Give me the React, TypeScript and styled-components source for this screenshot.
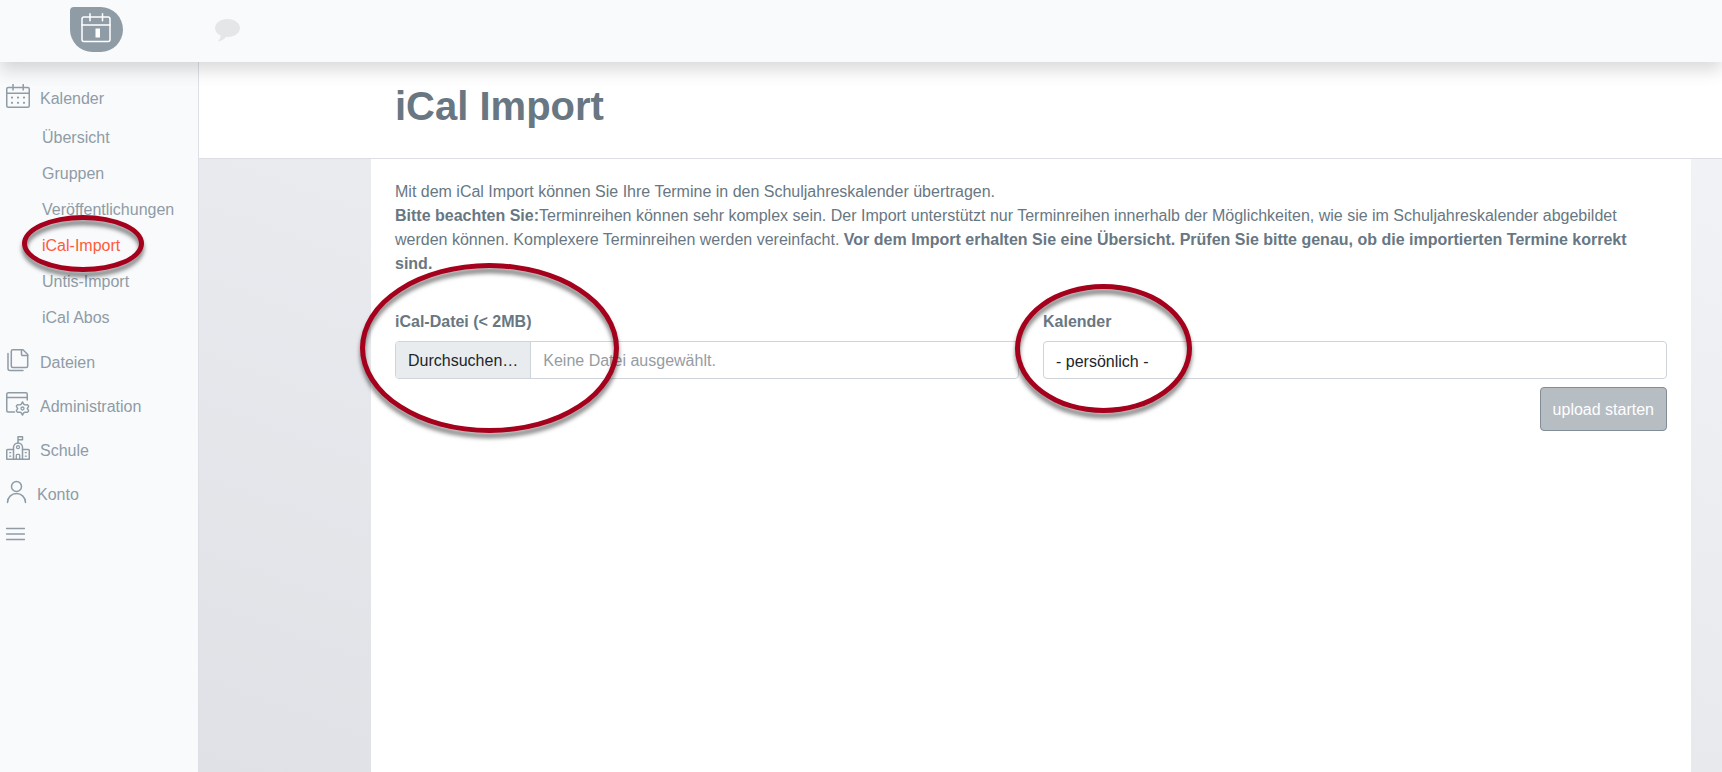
import React from "react";
import styled, { createGlobalStyle, css } from "styled-components";

const GlobalStyle = createGlobalStyle`
  *, *::before, *::after { box-sizing: border-box; }
  body {
    margin: 0;
    font-family: "Liberation Sans", Arial, sans-serif;
    font-size: 16px;
    line-height: 24px;
    color: #687782;
    background: #f8fafc;
  }
`;

const Page = styled.div`
  display: flex;
  flex-direction: column;
  min-height: 100vh;
`;

const Header = styled.header`
  position: relative;
  z-index: 2;
  display: flex;
  align-items: flex-start;
  gap: 92px;
  height: 62px;
  padding: 7px 70px;
  background: #f8fafc;
  box-shadow: 0 8px 16px rgba(0, 0, 0, 0.15);
`;

const Logo = styled.a`
  display: flex;
  justify-content: center;
  width: 53px;
  height: 45px;
  padding: 6px 2px 0 0;
  border-radius: 4px 23px 23px 23px;
  background: #8f9ca6;
  color: #fff;
`;

const ChatButton = styled.button`
  display: flex;
  padding: 12px 0 0;
  border: 0;
  background: none;
  color: #e5e6e7;
`;

const Body = styled.div`
  display: flex;
  flex: 1;
`;

const Sidebar = styled.nav`
  width: 199px;
  flex: none;
  padding-top: 12px;
  border-right: 1px solid #dcdfe4;
`;

const Menu = styled.ul`
  margin: 0;
  padding: 0;
  list-style: none;
`;

const SubMenu = styled(Menu)`
  padding: 1px 0 3px;
`;

const MenuLink = styled.a`
  display: flex;
  align-items: flex-start;
  gap: 10px;
  height: 44px;
  padding: 10px 6px;
  color: #8f9ca6;
  text-decoration: none;
`;

const MenuText = styled.span`
  padding-top: 3px;
`;

const SubItem = styled.li`
  position: relative;
`;

const SubLink = styled.a<{ $active?: boolean }>`
  display: block;
  padding: 7px 0 5px 42px;
  color: ${(p) => (p.$active ? "#ff5b3a" : "#8f9ca6")};
  text-decoration: none;
`;

const MenuToggle = styled.button`
  display: block;
  padding: 13px 6px;
  border: 0;
  background: none;
  color: #8f9ca6;

  svg { display: block; }
`;

const Main = styled.main`
  display: flex;
  flex: 1;
  flex-direction: column;
  min-width: 0;
  background: linear-gradient(20deg, #dfe1e6, #f3f4f7);
`;

const TitleBar = styled.div`
  padding: 20px 55px 28px 196px;
  border-bottom: 1px solid #dddfe5;
  background: #fff;
`;

const Title = styled.h1`
  margin: 0;
  font-size: 40px;
  line-height: 48px;
  font-weight: 700;
`;

const Panel = styled.section`
  flex: 1;
  margin: 0 31px 0 172px;
  padding: 21px 24px;
  background: #fff;
`;

const Intro = styled.p`
  margin: 0 0 34px;
`;

const FieldRow = styled.div`
  display: grid;
  grid-template-columns: 1fr 1fr;
  gap: 24px;
`;

const Field = styled.div`
  position: relative;
`;

const Label = styled.label`
  display: block;
  margin-bottom: 7px;
  font-weight: 700;
`;

const control = css`
  width: 100%;
  height: 38px;
  border: 1px solid #ced4da;
  border-radius: 4px;
  background: #fff;
`;

const FilePicker = styled.label`
  ${control}
  display: flex;
  overflow: hidden;
  color: #959ca3;
`;

const FileInput = styled.input`
  position: absolute;
  width: 1px;
  height: 1px;
  opacity: 0;
`;

const FileButton = styled.span`
  padding: 7px 12px 5px;
  border-right: 1px solid #ced4da;
  background: #e9ecef;
  color: #212529;
`;

const FileName = styled.span`
  padding: 7px 12px 5px;
`;

const Select = styled.select`
  ${control}
  padding: 8px 12px 6px;
  appearance: none;
  color: #212529;
  font: inherit;
`;

const Actions = styled.div`
  display: flex;
  justify-content: flex-end;
  margin-top: 8px;
`;

const SubmitButton = styled.button`
  height: 44px;
  padding: 2px 12px 0;
  border: 1px solid #828c95;
  border-radius: 4px;
  background: #b6bdc3;
  color: #fff;
  font: inherit;
`;

const Marker = styled.span<{ $top: number; $left: number; $width: number; $height: number }>`
  position: absolute;
  z-index: 3;
  top: ${(p) => p.$top}px;
  left: ${(p) => p.$left}px;
  width: ${(p) => p.$width}px;
  height: ${(p) => p.$height}px;
  border: 5px solid #a5001c;
  border-radius: 50%;
  filter: drop-shadow(0 5px 2px rgba(0, 0, 0, 0.5));
  pointer-events: none;
`;

type IconProps = { width?: number; height?: number; children: React.ReactNode };

const Icon = ({ width = 24, height = 24, children }: IconProps) => (
  <svg
    width={width}
    height={height}
    viewBox={`0 0 ${width} ${height}`}
    fill="none"
    stroke="currentColor"
    strokeWidth="1.5"
    strokeLinecap="round"
    strokeLinejoin="round"
    aria-hidden="true"
  >
    {children}
  </svg>
);

const LogoIcon = () => (
  <Icon width={30} height={30}>
    <rect x="1" y="4" width="28" height="24.5" rx="2" />
    <path d="M1 12h28M9 .8v7M21.5 .8v7" />
    <path d="M14.5 15.5h4.5v9h-4.5z" fill="currentColor" stroke="none" />
  </Icon>
);

const ChatIcon = () => (
  <Icon width={25} height={23}>
    <path
      d="M12.500 0C5.600 0 0 4 0 9c0 3.200 2.300 6 5.700 7.600-.1 2.300-1 4.200-2.900 5.900 3.500-.4 6.200-2.200 8-4.600.6.1 1.100.1 1.700.1 6.900 0 12.500-4 12.500-9S19.400 0 12.500 0z"
      fill="currentColor"
      stroke="none"
    />
  </Icon>
);

const CalendarIcon = () => (
  <Icon>
    <rect x=".75" y="3.5" width="22.5" height="19.75" rx="1.5" />
    <path d="M.75 9.250h22.500M7 .5v5.500M17.200 .5v5.500" />
    <path
      d="M6 13.600h.01M12 13.600h.01M18 13.600h.01M6 18.800h.01M12 18.800h.01M18 18.800h.01"
      strokeWidth="2.2"
    />
  </Icon>
);

const FilesIcon = () => (
  <Icon>
    <path d="M17 1.750H6.800a1.500 1.500 0 0 0-1.500 1.500v14.700a1.500 1.500 0 0 0 1.500 1.500h13.400a1.500 1.500 0 0 0 1.500-1.500V6.500z" />
    <path d="M15.500 1.750v4.500a1.200 1.200 0 0 0 1.200 1.200h5" />
    <path d="M2 5.500v15a2 2 0 0 0 2 2h13" />
  </Icon>
);

const AdminIcon = () => (
  <Icon>
    <path d="M8.500 20H2.250a1.500 1.500 0 0 1-1.500-1.500V2.250a1.500 1.500 0 0 1 1.500-1.500h17.500a1.500 1.500 0 0 1 1.500 1.500V8" />
    <path d="M.75 5.500h20.500" />
    <path
      strokeWidth="1.4"
      d="M15.300 12.100 16.500 9.900l1.200 2.200 1.300.8 2.600-.1q1.300.8.900 1.900l-1.200 1.800 1.200 1.800q.4 1.100-.9 1.900l-2.600-.1-1.300.8-1.200 2.200-1.200-2.200-1.300-.8-2.600.1q-1.300-.8-.9-1.900l1.200-1.800-1.200-1.800q-.4-1.100.9-1.900l2.600.1z"
    />
    <circle cx="16.5" cy="16.5" r="1.5" strokeWidth="1.3" />
  </Icon>
);

const SchoolIcon = () => (
  <Icon>
    <path d="M7.500 23.250V11.500a4.500 4.500 0 0 1 9 0v11.750" />
    <path d="M7.500 13.500H1.700q-.95 0-.95.95v8.800h22.500v-8.800q0-.95-.95-.95h-5.800M12 7V.75h4.500v3H12" />
    <circle cx="12" cy="11.2" r="1.5" strokeWidth="1.3" />
    <path d="M10.300 23v-3.700q0-1 1-1h1.400q1 0 1 1V23" strokeWidth="1.3" />
    <path d="M3.700 16.700h1M3.700 20.200h1M19.300 16.700h1M19.300 20.200h1" strokeWidth="1.3" />
  </Icon>
);

const UserIcon = () => (
  <Icon width={21}>
    <circle cx="10.5" cy="6.5" r="5" />
    <path d="M1.500 22.500a9 9 0 0 1 18 0" />
  </Icon>
);

const BarsIcon = () => (
  <Icon width={19} height={14}>
    <path d="M.5 1.500h18M.5 7h18M.5 12.500h18" />
  </Icon>
);

const subItems = ["Übersicht", "Gruppen", "Veröffentlichungen", "iCal-Import", "Untis-Import", "iCal Abos"];

const sections = [
  { text: "Dateien", icon: <FilesIcon /> },
  { text: "Administration", icon: <AdminIcon /> },
  { text: "Schule", icon: <SchoolIcon /> },
  { text: "Konto", icon: <UserIcon /> },
];

export default function App() {
  return (
    <Page>
      <GlobalStyle />
      <Header>
        <Logo href="#" aria-label="Startseite">
          <LogoIcon />
        </Logo>
        <ChatButton type="button" aria-label="Nachrichten">
          <ChatIcon />
        </ChatButton>
      </Header>
      <Body>
        <Sidebar>
          <Menu>
            <li>
              <MenuLink href="#">
                <CalendarIcon />
                <MenuText>Kalender</MenuText>
              </MenuLink>
              <SubMenu>
                {subItems.map((text) => {
                  const active = text === "iCal-Import";
                  return (
                    <SubItem key={text}>
                      <SubLink href="#" $active={active} aria-current={active ? "page" : undefined}>
                        {text}
                      </SubLink>
                      {active && <Marker $top={-12} $left={22} $width={122} $height={57} />}
                    </SubItem>
                  );
                })}
              </SubMenu>
            </li>
            {sections.map(({ text, icon }) => (
              <li key={text}>
                <MenuLink href="#">
                  {icon}
                  <MenuText>{text}</MenuText>
                </MenuLink>
              </li>
            ))}
          </Menu>
          <MenuToggle type="button" aria-label="Menü">
            <BarsIcon />
          </MenuToggle>
        </Sidebar>
        <Main>
          <TitleBar>
            <Title>iCal Import</Title>
          </TitleBar>
          <Panel>
            <Intro>
              Mit dem iCal Import können Sie Ihre Termine in den Schuljahreskalender übertragen.
              <br />
              <strong>Bitte beachten Sie:</strong>Terminreihen können sehr komplex sein. Der Import
              unterstützt nur Terminreihen innerhalb der Möglichkeiten, wie sie im
              Schuljahreskalender abgebildet werden können. Komplexere Terminreihen werden
              vereinfacht.{" "}
              <strong>
                Vor dem Import erhalten Sie eine Übersicht. Prüfen Sie bitte genau, ob die
                importierten Termine korrekt sind.
              </strong>
            </Intro>
            <form onSubmit={(e) => e.preventDefault()}>
              <FieldRow>
                <Field>
                  <Label htmlFor="ical-file">iCal-Datei (&lt; 2MB)</Label>
                  <FilePicker>
                    <FileInput id="ical-file" type="file" accept=".ics" />
                    <FileButton>Durchsuchen…</FileButton>
                    <FileName>Keine Datei ausgewählt.</FileName>
                  </FilePicker>
                  <Marker $top={-47} $left={-35} $width={259} $height={170} />
                </Field>
                <Field>
                  <Label htmlFor="calendar">Kalender</Label>
                  <Select id="calendar">
                    <option>- persönlich -</option>
                  </Select>
                  <Marker $top={-26} $left={-28} $width={177} $height={129} />
                </Field>
              </FieldRow>
              <Actions>
                <SubmitButton type="submit">upload starten</SubmitButton>
              </Actions>
            </form>
          </Panel>
        </Main>
      </Body>
    </Page>
  );
}
